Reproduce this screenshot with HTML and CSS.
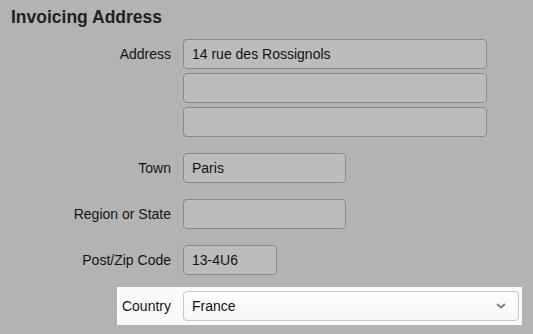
FILE: index.html
```html
<!DOCTYPE html>
<html>
<head>
<meta charset="utf-8">
<link rel="stylesheet" href="styles.css">
</head>
<body>
<h2 class="title">Invoicing Address</h2>
<div class="form">
  <div class="label">Address</div>
  <div class="stack">
    <div class="input w-long">14 rue des Rossignols</div>
    <div class="input w-long"></div>
    <div class="input w-long"></div>
  </div>
  <div class="label">Town</div>
  <div class="input w-mid">Paris</div>
  <div class="label">Region or State</div>
  <div class="input w-mid"></div>
  <div class="label">Post/Zip Code</div>
  <div class="input w-short">13-4U6</div>
  <div class="highlight">
    <div class="label">Country</div>
    <div class="select">
      <span>France</span>
      <svg class="chev" width="10" height="6" viewBox="0 0 10 6"><path d="M1 1 L5 4.5 L9 1" fill="none" stroke="#7a7f85" stroke-width="1.8"/></svg>
    </div>
  </div>
</div>
</body>
</html>
```
FILE: styles.css
```css
html, body {
  margin: 0;
  padding: 0;
  background: #b3b3b3;
  font-family: "Liberation Sans", Arial, sans-serif;
  color: #151515;
  width: 533px;
  height: 334px;
  overflow: hidden;
}
.title {
  margin: 0;
  padding: 6px 0 0 11px;
  font-size: 17.5px;
  line-height: 22px;
  font-weight: bold;
  color: #222;
}
.form {
  display: grid;
  grid-template-columns: 171px 304px;
  column-gap: 12px;
  row-gap: 16px;
  margin-top: 11px;
  align-items: start;
  font-size: 14px;
}
.label {
  text-align: right;
  line-height: 30px;
  height: 30px;
  white-space: nowrap;
}
.stack {
  display: flex;
  flex-direction: column;
  gap: 4px;
}
.input {
  box-sizing: border-box;
  height: 30px;
  border: 1px solid #8a8a8a;
  border-radius: 4px;
  background: #bcbcbc;
  padding: 0 8px;
  line-height: 28px;
  color: #111;
}
.w-long { width: 304px; }
.w-mid { width: 163px; }
.w-short { width: 94px; }
.highlight {
  grid-column: 1 / span 2;
  margin: -4px 0 0 117px;
  width: 405px;
  box-sizing: border-box;
  padding: 4px 3px 4px 4px;
  background: #fafafa;
  display: grid;
  grid-template-columns: 50px 336px;
  column-gap: 12px;
}
.select {
  box-sizing: border-box;
  height: 30px;
  border: 1px solid #c3c8ce;
  border-radius: 4px;
  background: linear-gradient(#ffffff, #f6f6f6);
  padding: 0 12px 0 8px;
  display: flex;
  align-items: center;
  justify-content: space-between;
  color: #111;
}
.chev { display: block; }
```
